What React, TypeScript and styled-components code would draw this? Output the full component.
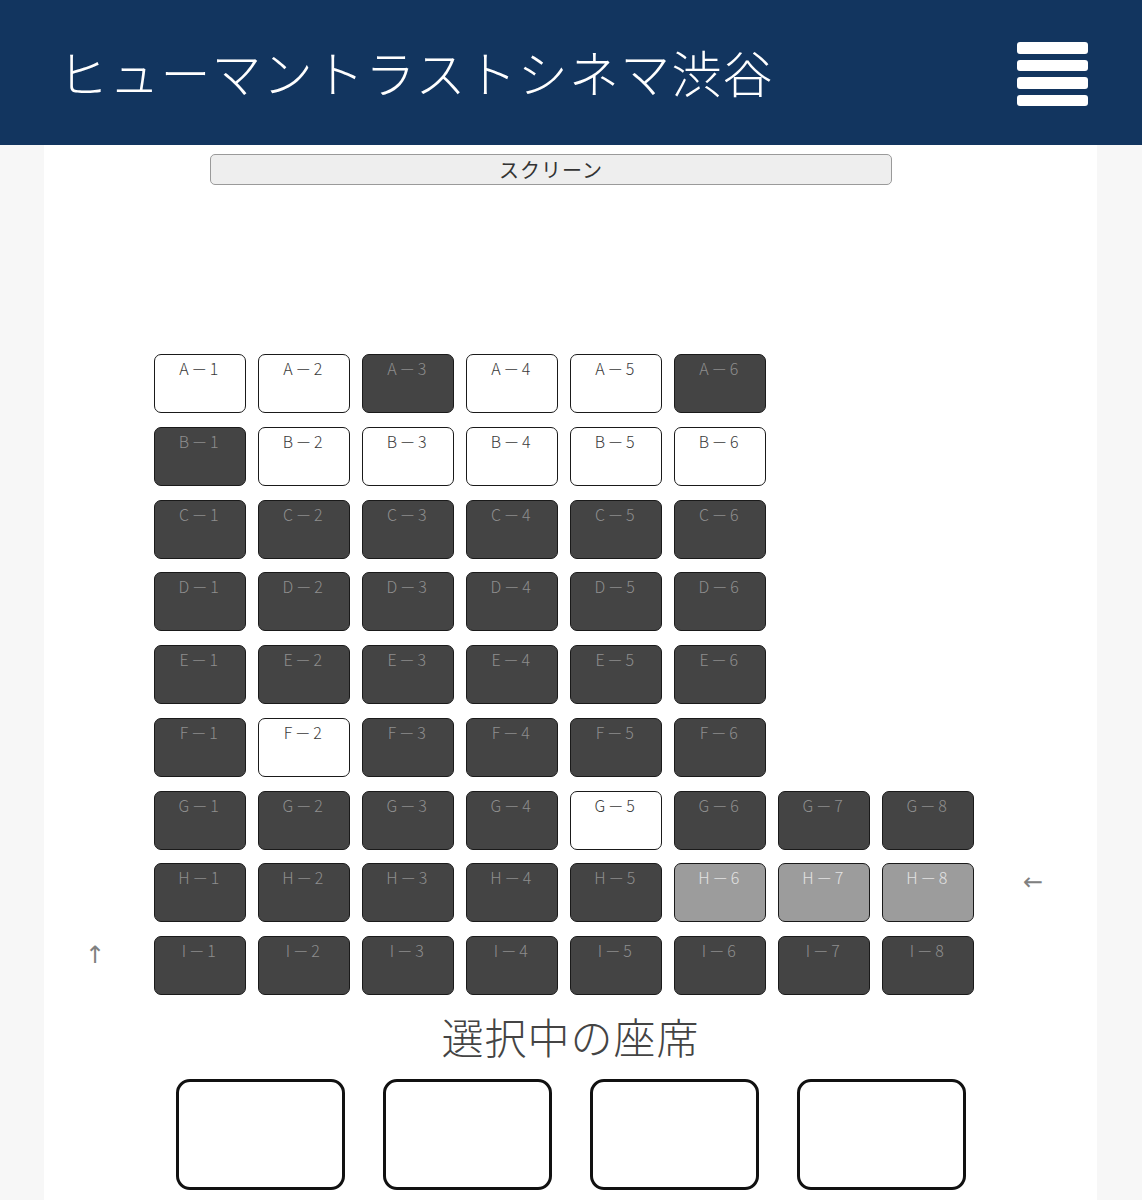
import React from 'react';
import styled, { createGlobalStyle } from 'styled-components';

const GlobalStyle = createGlobalStyle`
  html, body {
    margin: 0;
    padding: 0;
    background: #f7f7f7;
    font-family: "Noto Sans CJK JP", "Noto Sans", sans-serif;
  }
`;

const Header = styled.header`
  height: 145px;
  background: #12355f;
  display: flex;
  align-items: center;
  justify-content: space-between;
  padding: 0 54px 0 58px;
  box-sizing: border-box;
`;

const Title = styled.h1`
  margin: 0;
  color: #fff;
  font-size: 50px;
  font-weight: 300;
  letter-spacing: 1.2px;
  line-height: 1;
  padding-bottom: 4px;
`;

const Burger = styled.div`
  display: flex;
  flex-direction: column;
  gap: 6px;
  padding-top: 3px;
`;

const BurgerBar = styled.span`
  display: block;
  width: 71px;
  height: 11.5px;
  border-radius: 3px;
  background: #fff;
`;

const Panel = styled.main`
  margin: 0 45px 0 44px;
  background: #fff;
  padding: 9px 0 20px;
  min-height: 1055px;
`;

const ScreenBar = styled.div`
  margin-left: 166px;
  width: 682px;
  height: 31px;
  box-sizing: border-box;
  border: 1px solid #9a9a9a;
  border-radius: 5px;
  background: #eeeeee;
  display: flex;
  align-items: center;
  justify-content: center;
  font-size: 20px;
  color: #333;
  letter-spacing: 1px;
`;

const SeatMap = styled.div`
  margin: 169px 0 0 4px;
  display: grid;
  grid-template-columns: 94px repeat(8, 92px) 94px;
  grid-auto-rows: 59px;
  column-gap: 12px;
  row-gap: 13.75px;
`;

type SeatState = 'free' | 'taken' | 'held';

const Seat = styled.div<{ $state: SeatState; $col: number }>`
  grid-column: ${(p) => p.$col + 1};
  box-sizing: border-box;
  border: 1.5px solid #1a1a1a;
  border-radius: 7px;
  background: ${(p) => (p.$state === 'free' ? '#fff' : p.$state === 'held' ? '#9c9c9c' : '#444444')};
  color: ${(p) => (p.$state === 'free' ? '#3a3a3a' : p.$state === 'held' ? '#e2e2e2' : '#8e8e8e')};
  font-size: 16px;
  font-weight: 300;
  letter-spacing: 2.5px;
  text-align: center;
  padding-top: 3px;
  line-height: 20px;
`;

const Arrow = styled.div<{ $col: number; $row: number }>`
  grid-column: ${(p) => p.$col};
  grid-row: ${(p) => p.$row};
  display: flex;
  align-items: flex-start;
  justify-content: center;
  padding-top: 5px;
  line-height: 28px;
  color: #808080;
  font-size: 24px;
  font-family: "DejaVu Sans", sans-serif;
`;

const SelectedTitle = styled.h2`
  margin: 16px 0 0;
  text-align: center;
  font-size: 42px;
  font-weight: 300;
  color: #444;
  line-height: 50px;
  letter-spacing: 1px;
`;

const SelectedRow = styled.div`
  margin-top: 18px;
  display: flex;
  justify-content: center;
  gap: 38px;
`;

const SelectedBox = styled.div`
  width: 169px;
  height: 111px;
  box-sizing: border-box;
  border: 3px solid #111;
  border-radius: 14px;
  background: #fff;
`;

const rows: { label: string; seats: SeatState[] }[] = [
  { label: 'A', seats: ['free', 'free', 'taken', 'free', 'free', 'taken'] },
  { label: 'B', seats: ['taken', 'free', 'free', 'free', 'free', 'free'] },
  { label: 'C', seats: ['taken', 'taken', 'taken', 'taken', 'taken', 'taken'] },
  { label: 'D', seats: ['taken', 'taken', 'taken', 'taken', 'taken', 'taken'] },
  { label: 'E', seats: ['taken', 'taken', 'taken', 'taken', 'taken', 'taken'] },
  { label: 'F', seats: ['taken', 'free', 'taken', 'taken', 'taken', 'taken'] },
  { label: 'G', seats: ['taken', 'taken', 'taken', 'taken', 'free', 'taken', 'taken', 'taken'] },
  { label: 'H', seats: ['taken', 'taken', 'taken', 'taken', 'taken', 'held', 'held', 'held'] },
  { label: 'I', seats: ['taken', 'taken', 'taken', 'taken', 'taken', 'taken', 'taken', 'taken'] },
];

export default function App() {
  return (
    <>
      <GlobalStyle />
      <Header>
        <Title>ヒューマントラストシネマ渋谷</Title>
        <Burger>
          <BurgerBar />
          <BurgerBar />
          <BurgerBar />
          <BurgerBar />
        </Burger>
      </Header>
      <Panel>
        <ScreenBar>スクリーン</ScreenBar>
        <SeatMap>
          {rows.map((row, r) =>
            row.seats.map((state, i) => (
              <Seat key={`${row.label}${i}`} $state={state} $col={i + 1} style={{ gridRow: r + 1 }}>
                {row.label}－{i + 1}
              </Seat>
            ))
          )}
          <Arrow $col={10} $row={8}>←</Arrow>
          <Arrow $col={1} $row={9}>↑</Arrow>
        </SeatMap>
        <SelectedTitle>選択中の座席</SelectedTitle>
        <SelectedRow>
          <SelectedBox />
          <SelectedBox />
          <SelectedBox />
          <SelectedBox />
        </SelectedRow>
      </Panel>
    </>
  );
}
